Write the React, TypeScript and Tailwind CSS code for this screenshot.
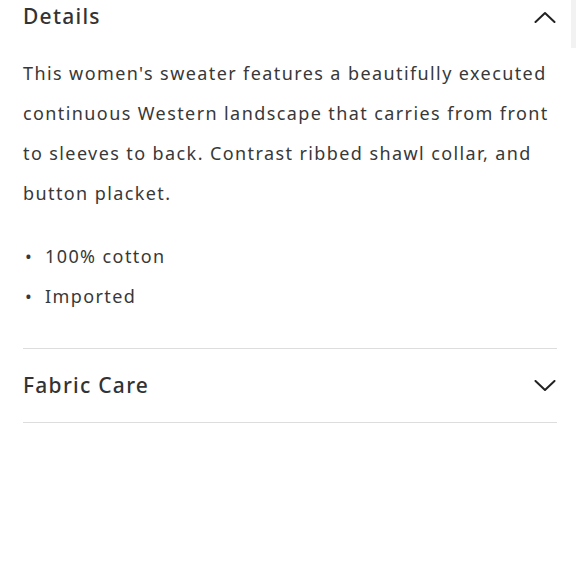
import React from "react";

const Chevron = ({ up }: { up?: boolean }) => (
  <svg width="22" height="12" viewBox="0 0 22 12" fill="none" stroke="#222" strokeWidth="2" strokeLinecap="round" strokeLinejoin="round">
    {up ? <path d="M1.5 11 L11 2 L20.5 11" /> : <path d="M1.5 1 L11 10 L20.5 1" />}
  </svg>
);

export default function App() {
  return (
    <div className="relative w-[580px] h-[580px] bg-white text-[#333] overflow-hidden" style={{ fontFamily: '"Noto Sans", sans-serif' }}>
      <div className="absolute right-[4px] top-0 w-[5px] h-[48px] bg-[#f2f2f2]" />
      <div className="pl-[23px] pr-[23px]">
        <div className="flex items-center justify-between h-[34px]">
          <span className="text-[21px] font-medium tracking-[0.06em] text-[#333]">Details</span>
          <span className="mr-[1px]"><Chevron up /></span>
        </div>
        <p className="mt-[19px] text-[18px] leading-[40px] tracking-[0.078em] text-[#383838]">
          This women's sweater features a beautifully executed continuous Western landscape that carries from front to sleeves to back. Contrast ribbed shawl collar, and button placket.
        </p>
        <ul className="mt-[23px] text-[18px] leading-[40px] tracking-[0.078em] text-[#383838]">
          <li className="flex items-center"><span className="w-[22px] pl-[2px]">•</span>100% cotton</li>
          <li className="flex items-center"><span className="w-[22px] pl-[2px]">•</span>Imported</li>
        </ul>
        <div className="mt-[32px] border-t border-[#ddd]" />
        <div className="flex items-center justify-between h-[73px]">
          <span className="text-[21px] font-medium tracking-[0.06em] text-[#333]">Fabric Care</span>
          <span className="mr-[1px]"><Chevron /></span>
        </div>
        <div className="border-t border-[#ddd]" />
      </div>
    </div>
  );
}
